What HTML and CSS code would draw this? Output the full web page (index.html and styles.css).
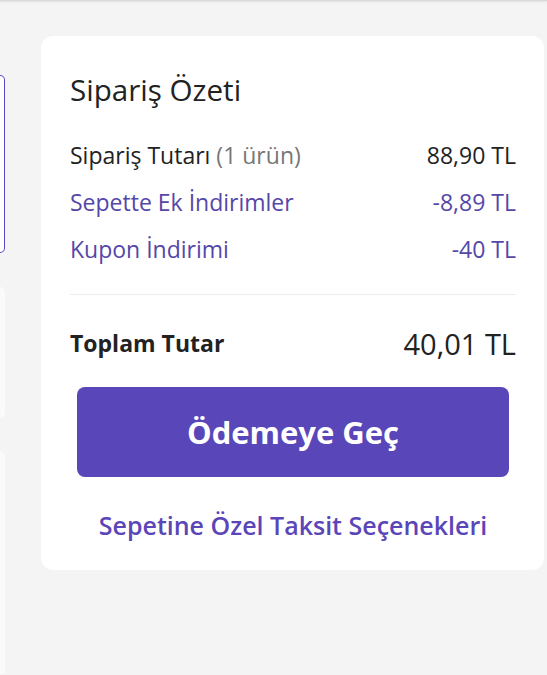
FILE: index.html
```html
<!DOCTYPE html>
<html lang="tr">
<head>
<meta charset="utf-8">
<link rel="stylesheet" href="styles.css">
</head>
<body>
<div class="topline"></div>
<div class="page">
  <div class="side">
    <div class="side-card outlined"></div>
    <div class="side-card short"></div>
    <div class="side-card tall"></div>
  </div>
  <section class="summary">
    <h2 class="title">Sipariş Özeti</h2>
    <div class="rows">
      <div class="row"><span>Sipariş Tutarı <span class="muted">(1 ürün)</span></span><span class="val">88,90 TL</span></div>
      <div class="row accent"><span>Sepette Ek İndirimler</span><span class="val">-8,89 TL</span></div>
      <div class="row accent"><span>Kupon İndirimi</span><span class="val">-40 TL</span></div>
    </div>
    <div class="divider"></div>
    <div class="total"><span class="total-label">Toplam Tutar</span><span class="total-val">40,01 TL</span></div>
    <button class="pay">Ödemeye Geç</button>
    <a class="installments" href="#">Sepetine Özel Taksit Seçenekleri</a>
  </section>
</div>
</body>
</html>
```
FILE: styles.css
```css
* { box-sizing: border-box; }
html, body { margin: 0; padding: 0; }
body {
  background: #f4f4f4;
  font-family: "Open Sans", "Noto Sans", sans-serif;
  color: #222;
  width: 547px;
  height: 675px;
  overflow: hidden;
}
.topline {
  height: 1px;
  background: #d9d9d9;
  box-shadow: 0 1px 2px rgba(0,0,0,0.12);
}
.page {
  display: flex;
  align-items: flex-start;
  gap: 36px;
  padding-top: 35px;
}
.side {
  width: 5px;
  display: flex;
  flex-direction: column;
  padding-top: 39px;
}
.side-card {
  background: #fff;
  border-radius: 0 8px 8px 0;
}
.side-card.outlined {
  height: 178px;
  border: 1px solid #5b46c4;
  border-left: none;
}
.side-card.short {
  height: 131px;
  margin-top: 34px;
  background: #fafafa;
}
.side-card.tall {
  height: 223px;
  margin-top: 33px;
  background: #fafafa;
  border-radius: 0 8px 0 0;
}
.summary {
  width: 503px;
  background: #fff;
  border-radius: 12px;
  padding: 34px 28px 28px 29px;
  display: flex;
  flex-direction: column;
}
.title {
  margin: 0;
  font-size: 29.6px;
  font-weight: 400;
  line-height: 40px;
  color: #222;
}
.rows {
  margin-top: 29px;
  display: flex;
  flex-direction: column;
  gap: 15px;
}
.row {
  display: flex;
  justify-content: space-between;
  font-size: 23px;
  line-height: 32px;
  font-weight: 400;
  color: #222;
}
.row .muted { color: #777; }
.row.accent { color: #5547a8; }
.divider {
  height: 1px;
  background: #ececec;
  margin-top: 29px;
}
.total {
  margin-top: 30px;
  display: flex;
  justify-content: space-between;
  align-items: center;
  height: 36px;
}
.total-label {
  font-size: 23px;
  font-weight: 700;
  color: #222;
}
.total-val {
  font-size: 29px;
  font-weight: 400;
  color: #222;
}
.pay {
  margin: 26px 7px 0 7px;
  height: 90px;
  border: none;
  border-radius: 8px;
  background: #5946b9;
  color: #fff;
  font-family: inherit;
  font-size: 31px;
  font-weight: 700;
  cursor: pointer;
}
.installments {
  margin-top: 31px;
  text-align: center;
  color: #5a46b8;
  font-size: 25px;
  font-weight: 600;
  line-height: 34px;
  text-decoration: none;
}
```
